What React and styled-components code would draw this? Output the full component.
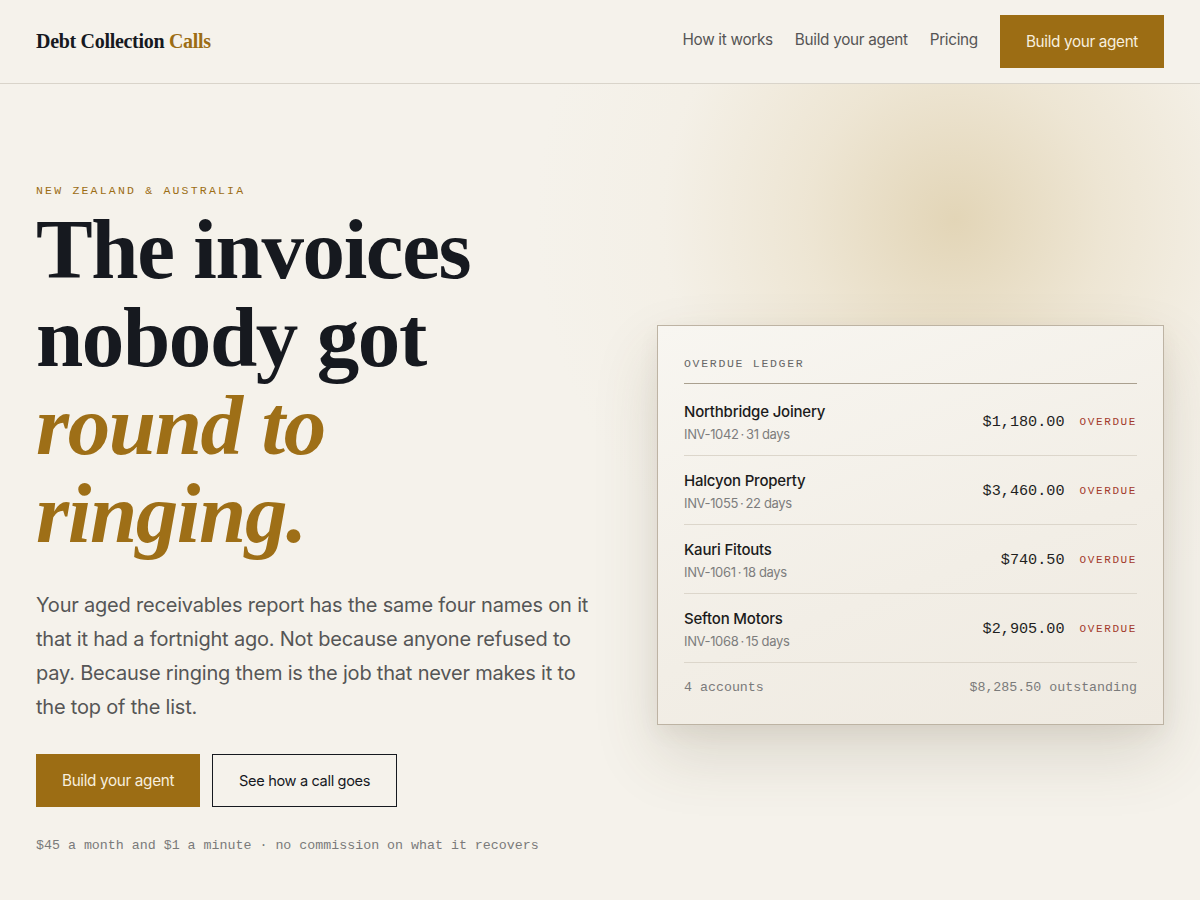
import React from 'react';
import styled, { createGlobalStyle } from 'styled-components';

const gold = '#9c6d14';
const ink = '#16191f';
const mono = '"Liberation Mono", "DejaVu Sans Mono", monospace';

const GlobalStyle = createGlobalStyle`
  * { box-sizing: border-box; }
  html, body { margin: 0; padding: 0; }
  body {
    background: #f5f2eb;
    color: ${ink};
    font-family: Inter, "Noto Sans", sans-serif;
  }
`;

const Page = styled.div`
  min-height: 900px;
  background:
    radial-gradient(circle at 955px 220px, rgba(222, 206, 170, 0.8) 0, rgba(230, 217, 188, 0.5) 150px, rgba(240, 232, 216, 0.22) 290px, rgba(245, 242, 235, 0) 420px),
    #f5f2eb;
`;

const Header = styled.header`
  height: 84px;
  padding: 0 36px;
  display: flex;
  align-items: center;
  justify-content: space-between;
  border-bottom: 1px solid #d9d4ca;
  background: #f5f2eb;
`;

const Logo = styled.div`
  font-family: "Liberation Serif", "DejaVu Serif", serif;
  font-weight: 700;
  font-size: 20px;
  letter-spacing: -0.3px;
  color: ${ink};
  span { color: ${gold}; }
`;

const Nav = styled.nav`
  display: flex;
  align-items: center;
  gap: 22px;
`;

const NavLink = styled.a`
  font-size: 15.3px;
  color: #555;
  text-decoration: none;
  letter-spacing: -0.3px;
  margin-top: -4px;
`;

const Button = styled.a`
  display: inline-flex;
  align-items: center;
  justify-content: center;
  height: 53px;
  padding: 0 ${(p) => p.$pad || 24}px;
  font-size: ${(p) => p.$size || 15.3}px;
  letter-spacing: -0.35px;
  text-decoration: none;
  background: ${(p) => (p.$outline ? 'transparent' : gold)};
  color: ${(p) => (p.$outline ? ink : '#f7efdf')};
  border: 1px solid ${(p) => (p.$outline ? ink : gold)};
`;

const Hero = styled.main`
  display: grid;
  grid-template-columns: 1fr 507px;
  column-gap: 57px;
  padding: 100px 36px 0;
`;

const Left = styled.section`
  display: flex;
  flex-direction: column;
`;

const Eyebrow = styled.div`
  font-family: ${mono};
  font-size: 11.5px;
  letter-spacing: 2.2px;
  color: ${gold};
`;

const Title = styled.h1`
  margin: 8px 0 0;
  max-width: 540px;
  font-family: "Liberation Serif", "DejaVu Serif", serif;
  font-weight: 700;
  font-size: 85px;
  line-height: 88px;
  letter-spacing: -1.4px;
  color: ${ink};
  em {
    display: block;
    color: #9e6f17;
    font-style: italic;
  }
`;

const Lead = styled.p`
  margin: 31px 0 0;
  font-size: 20px;
  line-height: 34px;
  color: #555656;
  letter-spacing: -0.2px;
`;

const Actions = styled.div`
  display: flex;
  gap: 12px;
  margin-top: 30px;
`;

const Note = styled.div`
  margin-top: 31px;
  font-family: ${mono};
  font-size: 13.3px;
  color: #7a7a7a;
`;

const Card = styled.aside`
  align-self: start;
  margin-top: 141px;
  padding: 31px 26px 29px;
  border: 1px solid #bdb3a3;
  background: linear-gradient(160deg, #f8f6f1 0%, #f2eee6 60%, #efeae1 100%);
  box-shadow: 0 30px 60px rgba(90, 75, 45, 0.16), 0 8px 20px rgba(90, 75, 45, 0.06);
`;

const CardLabel = styled.div`
  font-family: ${mono};
  font-size: 11.5px;
  letter-spacing: 1.7px;
  color: #676767;
  padding-bottom: 13px;
  margin-bottom: 3px;
  border-bottom: 1px solid #aaa08f;
`;

const Row = styled.div`
  display: flex;
  align-items: center;
  justify-content: space-between;
  height: 69px;
  border-bottom: 1px solid #dcd6cb;
  padding-top: 1px;
`;

const Who = styled.div`
  display: flex;
  flex-direction: column;
  gap: 5px;
`;

const Name = styled.div`
  font-size: 15px;
  font-weight: 500;
  color: #1b1b1b;
  letter-spacing: -0.2px;
`;

const Meta = styled.div`
  font-size: 13px;
  color: #7d7d7d;
  letter-spacing: -0.35px;
`;

const Figures = styled.div`
  display: flex;
  align-items: center;
  gap: 15px;
`;

const Amount = styled.div`
  font-family: ${mono};
  font-size: 15.2px;
  color: #1f1f1f;
`;

const Status = styled.div`
  font-family: ${mono};
  font-size: 11px;
  letter-spacing: 1.6px;
  color: #a33a2c;
`;

const Footer = styled.div`
  display: flex;
  justify-content: space-between;
  padding-top: 17px;
  font-family: ${mono};
  font-size: 13.3px;
  color: #7a7a7a;
`;

const ledger = [
  { name: 'Northbridge Joinery', inv: 'INV-1042', days: 31, amount: '$1,180.00' },
  { name: 'Halcyon Property', inv: 'INV-1055', days: 22, amount: '$3,460.00' },
  { name: 'Kauri Fitouts', inv: 'INV-1061', days: 18, amount: '$740.50' },
  { name: 'Sefton Motors', inv: 'INV-1068', days: 15, amount: '$2,905.00' },
];

const App = () => (
  <>
    <GlobalStyle />
    <Page>
      <Header>
        <Logo>
          Debt Collection <span>Calls</span>
        </Logo>
        <Nav>
          <NavLink href="#how">How it works</NavLink>
          <NavLink href="#build">Build your agent</NavLink>
          <NavLink href="#pricing">Pricing</NavLink>
          <Button href="#build" $pad={25}>Build your agent</Button>
        </Nav>
      </Header>

      <Hero>
        <Left>
          <Eyebrow>NEW ZEALAND &amp; AUSTRALIA</Eyebrow>
          <Title>
            The invoices nobody got <em>round to ringing.</em>
          </Title>
          <Lead>
            Your aged receivables report has the same four names on it that it had a
            fortnight ago. Not because anyone refused to pay. Because ringing them is the
            job that never makes it to the top of the list.
          </Lead>
          <Actions>
            <Button href="#build" $pad={25}>Build your agent</Button>
            <Button href="#call" $outline $pad={26} $size={14.6}>See how a call goes</Button>
          </Actions>
          <Note>$45 a month and $1 a minute · no commission on what it recovers</Note>
        </Left>

        <Card>
          <CardLabel>OVERDUE LEDGER</CardLabel>
          {ledger.map((item) => (
            <Row key={item.inv}>
              <Who>
                <Name>{item.name}</Name>
                <Meta>
                  {item.inv}{'\u2009·\u2009'}{item.days} days
                </Meta>
              </Who>
              <Figures>
                <Amount>{item.amount}</Amount>
                <Status>OVERDUE</Status>
              </Figures>
            </Row>
          ))}
          <Footer>
            <span>4 accounts</span>
            <span>$8,285.50 outstanding</span>
          </Footer>
        </Card>
      </Hero>
    </Page>
  </>
);

export default App;
